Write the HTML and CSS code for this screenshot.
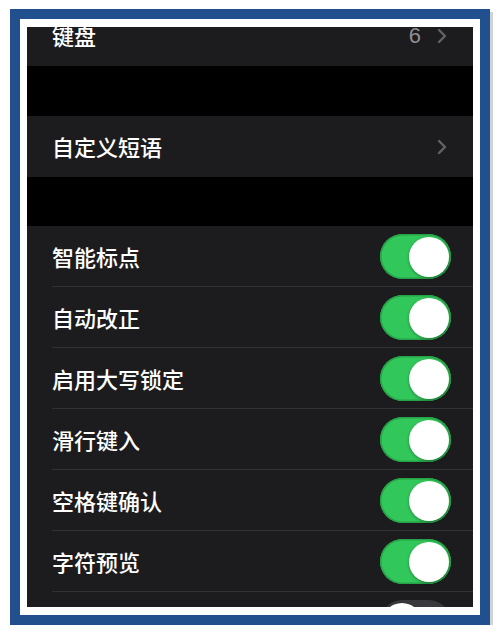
FILE: index.html
```html
<!DOCTYPE html>
<html lang="zh-CN">
<head>
<meta charset="utf-8">
<title>键盘设置</title>
<link rel="stylesheet" href="styles.css">
</head>
<body>
<div class="frame">
  <div class="screen">
    <div class="group">
      <div class="row row-first">
        <span class="label">键盘</span>
        <span class="detail">6</span>
        <svg class="chev" viewBox="0 0 10 16" width="10" height="16"><polyline points="2,2 8,8 2,14" fill="none" stroke="#636366" stroke-width="2.4" stroke-linecap="round" stroke-linejoin="round"/></svg>
      </div>
    </div>
    <div class="gap"></div>
    <div class="group">
      <div class="row">
        <span class="label">自定义短语</span>
        <svg class="chev" viewBox="0 0 10 16" width="10" height="16"><polyline points="2,2 8,8 2,14" fill="none" stroke="#636366" stroke-width="2.4" stroke-linecap="round" stroke-linejoin="round"/></svg>
      </div>
    </div>
    <div class="gap gap2"></div>
    <div class="group">
      <div class="row sep"><span class="label">智能标点</span><span class="toggle"><span class="knob"></span></span></div>
      <div class="row sep"><span class="label">自动改正</span><span class="toggle"><span class="knob"></span></span></div>
      <div class="row sep"><span class="label">启用大写锁定</span><span class="toggle"><span class="knob"></span></span></div>
      <div class="row sep"><span class="label">滑行键入</span><span class="toggle"><span class="knob"></span></span></div>
      <div class="row sep"><span class="label">空格键确认</span><span class="toggle"><span class="knob"></span></span></div>
      <div class="row sep"><span class="label">字符预览</span><span class="toggle"><span class="knob"></span></span></div>
      <div class="row row-last"><span class="label"></span><span class="toggle off"><span class="knob"></span></span></div>
    </div>
  </div>
</div>
</body>
</html>
```
FILE: styles.css
```css
html, body {
  margin: 0;
  padding: 0;
  background: #ffffff;
}
body {
  font-family: "Noto Sans CJK SC", "Noto Sans", sans-serif;
}
.frame {
  margin: 9px 0 0 10px;
  width: 480px;
  box-sizing: border-box;
  border: 10px solid #22508e;
  padding: 8px 7px 8px 7px;
  background: #ffffff;
  box-shadow: 3px 3px 0 #cfd2d6;
}
.screen {
  height: 580px;
  background: #000000;
}
.group {
  background: #1c1c1e;
}
.gap {
  height: 50px;
}
.gap2 {
  height: 49px;
}
.row {
  height: 61px;
  box-sizing: border-box;
  display: flex;
  align-items: center;
  padding: 0 22px 0 25px;
  position: relative;
}
.row.sep::after {
  content: "";
  position: absolute;
  left: 25px;
  right: 0;
  bottom: 0;
  height: 1px;
  background: #323234;
}
.label {
  flex: 1;
  color: #ffffff;
  font-size: 22px;
  font-weight: 500;
  line-height: 1.2;
}
.row-first {
  height: 39px;
  align-items: flex-start;
}
.row-first .label,
.row-first .detail {
  line-height: 17px;
}
.row-last {
  height: 15px;
  overflow: hidden;
  align-items: flex-start;
}
.row-last .toggle {
  flex: none;
  margin-top: 8px;
}
.detail {
  color: #8e8e93;
  font-family: "Liberation Sans", "Noto Sans", sans-serif;
  font-size: 22px;
  line-height: 1.2;
  margin-right: 16px;
}
.chev {
  margin-right: 4px;
}
.row-first .chev {
  margin-top: 1px;
}
.toggle {
  width: 71px;
  height: 45px;
  box-sizing: border-box;
  border-radius: 23px;
  background: #32c75a;
  box-shadow: inset 0 0 0 1.5px #27a247;
  display: flex;
  align-items: center;
  justify-content: flex-end;
  padding: 0 2px;
}
.toggle.off {
  background: #39393d;
  justify-content: flex-start;
  box-shadow: none;
}
.knob {
  width: 40px;
  height: 40px;
  border-radius: 50%;
  background: #ffffff;
  box-shadow: 0 1px 3px rgba(0,0,0,0.35);
}
```
